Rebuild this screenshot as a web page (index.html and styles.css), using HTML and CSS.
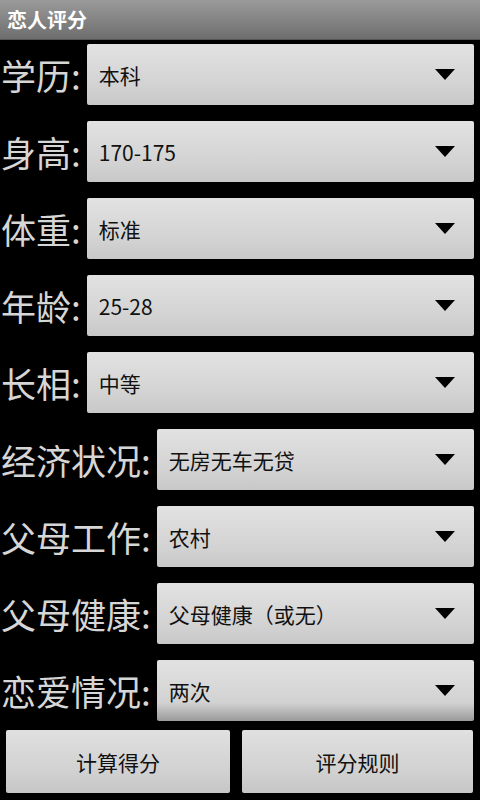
FILE: index.html
```html
<!DOCTYPE html>
<html lang="zh">

<head>
    <meta charset="utf-8">
    <meta name="viewport" content="width=device-width, initial-scale=1.0">
    <title>恋人评分</title>
    <link rel="stylesheet" href="styles.css">
</head>

<body>
    <header class="titelbar">恋人评分</header>

    <main class="skema">
        <div class="felt">
            <label class="navn">学历:</label>
            <div class="vaelger"><span>本科</span><i class="pil"></i></div>
        </div>
        <div class="felt">
            <label class="navn">身高:</label>
            <div class="vaelger"><span>170-175</span><i class="pil"></i></div>
        </div>
        <div class="felt">
            <label class="navn">体重:</label>
            <div class="vaelger"><span>标准</span><i class="pil"></i></div>
        </div>
        <div class="felt">
            <label class="navn">年龄:</label>
            <div class="vaelger"><span>25-28</span><i class="pil"></i></div>
        </div>
        <div class="felt">
            <label class="navn">长相:</label>
            <div class="vaelger"><span>中等</span><i class="pil"></i></div>
        </div>
        <div class="felt">
            <label class="navn">经济状况:</label>
            <div class="vaelger"><span>无房无车无贷</span><i class="pil"></i></div>
        </div>
        <div class="felt">
            <label class="navn">父母工作:</label>
            <div class="vaelger"><span>农村</span><i class="pil"></i></div>
        </div>
        <div class="felt">
            <label class="navn">父母健康:</label>
            <div class="vaelger"><span>父母健康（或无）</span><i class="pil"></i></div>
        </div>
        <div class="felt">
            <label class="navn">恋爱情况:</label>
            <div class="vaelger sidste"><span>两次</span><i class="pil"></i></div>
        </div>
    </main>

    <footer class="knapper">
        <button class="knap">计算得分</button>
        <button class="knap">评分规则</button>
    </footer>
</body>

</html>
```

FILE: styles.css
```css
body {
    margin: 0;
    padding: 0;
    width: 480px;
    height: 800px;
    background: #000;
    font-family: "Noto Sans CJK SC", "DejaVu Sans", sans-serif;
    overflow: hidden;
}

.titelbar {
    height: 40px;
    line-height: 40px;
    padding-left: 7px;
    color: #fff;
    font-size: 20px;
    font-weight: bold;
    background: linear-gradient(#9a9a9a, #6e6e6e);
    border-bottom: 1px solid #555;
    box-sizing: border-box;
}

.skema {
    display: flex;
    flex-direction: column;
    gap: 16px;
    padding: 4px 6px 0 1px;
}

.felt {
    display: flex;
    align-items: center;
    gap: 6px;
    height: 61px;
}

.navn {
    color: #d6d6d6;
    font-size: 35px;
    line-height: 1;
    white-space: nowrap;
}

.vaelger {
    flex: 1;
    height: 61px;
    display: flex;
    align-items: center;
    justify-content: space-between;
    padding: 0 19px 0 12px;
    box-sizing: border-box;
    background: linear-gradient(#e2e2e2, #d2d2d2 70%, #c8c8c8);
    border-radius: 2px;
    color: #111;
    font-size: 21px;
}

.vaelger.sidste {
    background: linear-gradient(#e2e2e2, #d2d2d2 70%, #9a9a9a 100%);
}

.pil {
    width: 0;
    height: 0;
    border-left: 10px solid transparent;
    border-right: 10px solid transparent;
    border-top: 11px solid #000;
}

.knapper {
    display: grid;
    grid-template-columns: 224px 231px;
    gap: 12px;
    padding: 9px 0 0 6px;
}

.knap {
    height: 63px;
    border: none;
    border-radius: 2px;
    background: linear-gradient(#e0e0e0, #d0d0d0 70%, #c6c6c6);
    color: #111;
    font-family: "Noto Sans CJK SC", sans-serif;
    font-size: 21px;
}
```
